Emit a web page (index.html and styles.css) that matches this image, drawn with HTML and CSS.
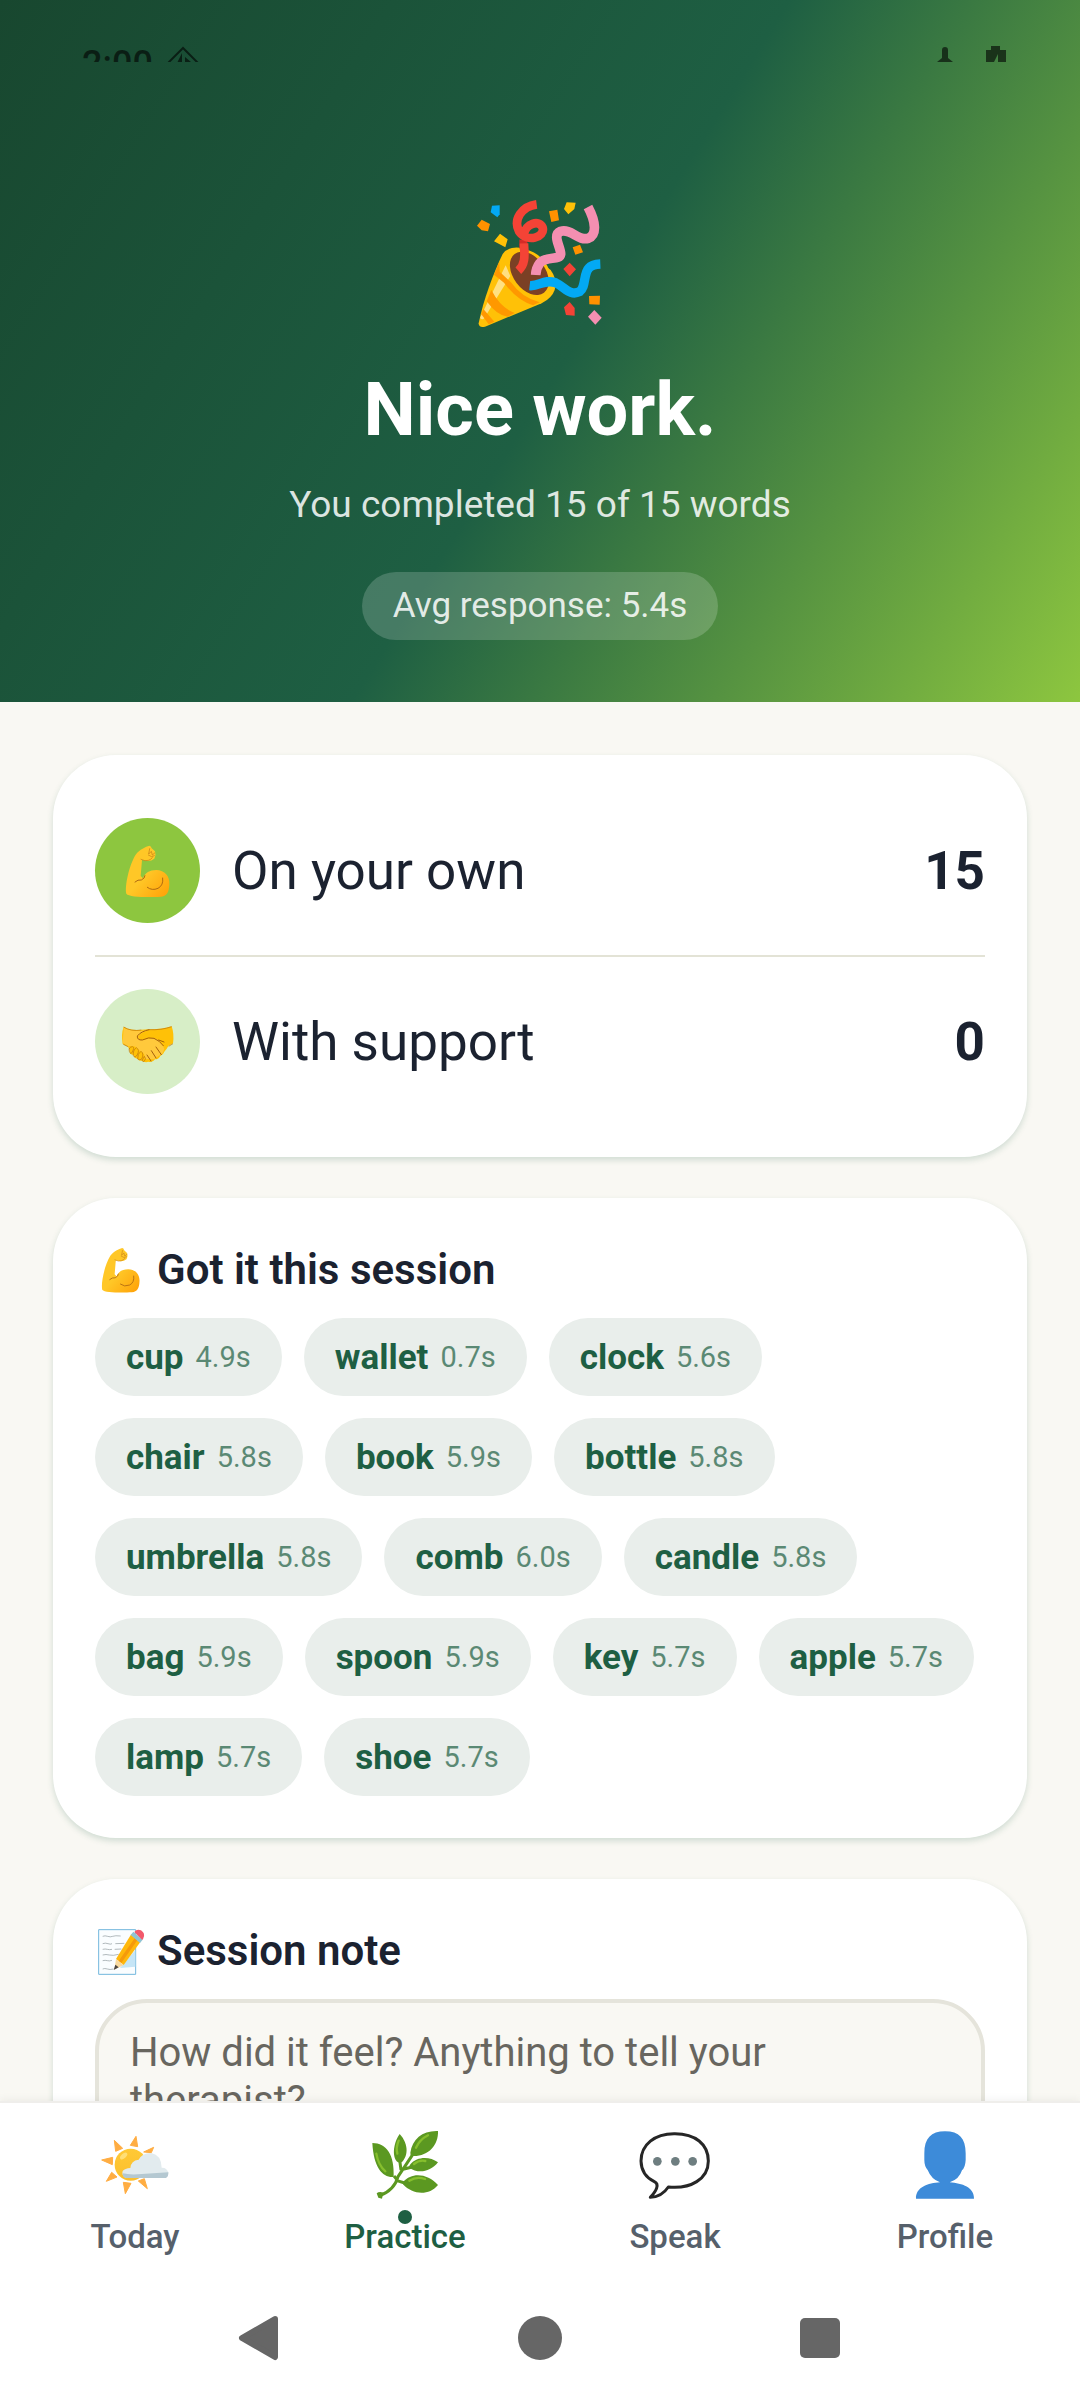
FILE: index.html
```html
<!DOCTYPE html>
<html lang="en">
<head>
  <meta charset="UTF-8">
  <meta name="viewport" content="width=device-width, initial-scale=1.0">
  <title>Session summary</title>
  <link rel="stylesheet" href="styles.css">
</head>
<body>
  <svg class="defs" aria-hidden="true">
    <defs>
      <linearGradient id="skin" x1="0" y1="0" x2="1" y2="1">
        <stop offset="0.5" stop-color="#ffc727"/>
        <stop offset="1" stop-color="#ff9f06"/>
      </linearGradient>
      <linearGradient id="sun" x1="0" y1="0" x2="0" y2="1">
        <stop offset="0" stop-color="#ffc935"/>
        <stop offset="1" stop-color="#fbbf2e"/>
      </linearGradient>
    </defs>
    <symbol id="arm" viewBox="112 127 180 180">
      <path fill="url(#skin)" d="M137 285C132 262 145 200 165 168C177 152 195 144 206 141Q211 141 213 149L223 158Q227 168 221 180Q213 187 201 187L184 184L180 232L187 239C193 222 207 214 227 214C252 215 268 232 266 258C265 280 258 293 240 294C205 296 145 296 137 285Z"/>
      <path fill="none" stroke="#b06a12" stroke-width="3" stroke-linecap="round" d="M163 250Q172 242 182 244Q193 239 193 231M200 266Q214 277 232 269Q249 260 246 238"/>
      <path fill="none" stroke="#c67a16" stroke-width="2" stroke-linecap="round" d="M181 182Q194 189 203 185Q211 183 215 177M207 150L204 166L212 158L215 169L222 163M203 169L213 174L221 171"/>
    </symbol>
  </svg>

  <div class="app">
    <main class="scroll">
      <header class="hero">
        <div class="status">
          <span class="clock">2:00</span>
          <svg class="status-left" width="40" height="40" viewBox="0 0 40 40">
            <path d="M20 6L3 23H37Z" fill="none" stroke="currentColor" stroke-width="2"/>
            <path d="M19 11V25H12ZM22 15L28 20V24H22Z" fill="currentColor"/>
          </svg>
          <svg class="status-right" width="72" height="40" viewBox="0 0 72 40">
            <path d="M6 8Q6 5 9 5T12 8V16L17 20H1L6 16Z" fill="currentColor"/>
            <path d="M50 8H55V4H64V8H70V22H62V12L57 22H50Z" fill="currentColor"/>
          </svg>
        </div>
        <svg class="party" viewBox="0 0 480 480" aria-hidden="true">
          <path fill="#ffc107" d="M56 430C70 360 100 280 128 222Q143 199 180 203L272 270Q293 300 284 330Q276 354 245 370L75 440Q56 444 56 430Z"/>
          <path fill="#ffe082" d="M137 256L60 414Q68 422 73 414L151 288Z"/>
          <path fill="#ff9800" d="M118 245L102 284L132 308Q170 360 219 376L239 367Q184 351 154 308L119 275ZM94 330L80 364Q112 408 143 410L164 399Q122 384 94 330ZM70 387L64 403L86 433L103 425Z"/>
          <ellipse cx="212" cy="278" rx="53" ry="76" transform="rotate(-37 212 278)" fill="#ffc107"/>
          <ellipse cx="208" cy="280" rx="48" ry="73" transform="rotate(-37 208 280)" fill="#7b4025"/>
          <path fill="none" stroke="#d52b27" stroke-width="24" d="M190 180Q188 199 194 218"/>
          <path fill="none" stroke="#f44336" stroke-width="26" d="M230 73C185 79 159 119 177 154C201 190 256 172 248 143C238 117 196 132 192 162M192 190C193 220 199 251 175 272"/>
          <path fill="none" stroke="#f48fb1" stroke-width="29" d="M384 81C408 126 411 165 385 175C355 184 333 145 302 154C275 165 303 202 302 222C299 244 259 225 239 250Q228 264 227 285"/>
          <path fill="none" stroke="#03a9f4" stroke-width="28" d="M209 317C236 320 254 296 286 308C315 322 330 349 359 335C378 322 370 281 386 265Q396 253 421 252"/>
          <path fill="#03a9f4" d="M96 77L119 76V103L112 112L92 97Z"/>
          <path fill="#ff9100" d="M65 119L90 132L84 154L65 151L51 137ZM267 94L292 89L297 121L274 126ZM338 202L360 194L369 217L346 224ZM387 348L420 347L419 374L388 373Z"/>
          <path fill="#ffc107" d="M120 161L143 178L136 202L102 184ZM320 67L347 68L343 87L325 103L312 87Z"/>
          <path fill="#f44336" d="M329 248L348 268L329 289L310 267ZM329 366L344 384V407L318 405L312 382Z"/>
          <path fill="#f48fb1" d="M403 390L425 413L406 434L384 410Z"/>
        </svg>
        <h1>Nice work.</h1>
        <p class="subtitle">You completed 15 of 15 words</p>
        <p class="pill">Avg response: 5.4s</p>
      </header>

      <div class="content">
        <section class="card stats">
          <div class="stat">
            <span class="badge"><svg><use href="#arm"/></svg></span>
            <span class="stat-label">On your own</span>
            <strong>15</strong>
          </div>
          <div class="stat">
            <span class="badge light">
              <svg viewBox="112 634 180 180" aria-hidden="true">
                <path fill="#ffc107" d="M129 678Q151 691 182 687L204 686Q242 687 273 677Q281 700 277 728L263 736Q257 747 252 752Q248 762 239 766Q233 777 223 776Q216 787 203 783Q194 787 183 780Q174 781 170 774Q160 772 158 763Q146 761 147 750L142 738L126 730Q121 700 129 678Z"/>
                <path fill="#ffc93c" d="M172 708Q180 696 200 689L179 690Q150 692 129 681L126 727L143 737Q165 732 175 749Q192 754 194 775L219 776L246 758L251 744Q237 714 218 712Q197 715 187 718Q174 718 172 708Z"/>
                <path fill="none" stroke="#a5600c" stroke-width="3" stroke-linecap="round" stroke-linejoin="round" d="M205 687Q181 692 170 706Q169 719 185 718Q205 708 220 713Q237 720 248 735M234 718L250 724M226 739L242 762M212 750L226 772M199 763L211 781"/>
                <path fill="none" stroke="#b9710f" stroke-width="2" stroke-linejoin="round" d="M129 679Q151 693 182 688M204 687Q242 689 273 678M128 731L142 738M264 737L277 729M146 752Q143 739 156 738Q163 740 154 755Q150 763 146 752ZM158 765Q156 749 167 741Q178 747 170 762Q163 774 158 765ZM171 775Q170 758 181 752Q190 758 184 774Q178 781 171 775ZM184 780L191 767Q199 773 190 783Z"/>
              </svg>
            </span>
            <span class="stat-label">With support</span>
            <strong>0</strong>
          </div>
        </section>

        <section class="card">
          <h2><svg><use href="#arm"/></svg>Got it this session</h2>
          <ul class="chips">
            <li><b>cup</b><span>4.9s</span></li>
            <li><b>wallet</b><span>0.7s</span></li>
            <li><b>clock</b><span>5.6s</span></li>
            <li><b>chair</b><span>5.8s</span></li>
            <li><b>book</b><span>5.9s</span></li>
            <li><b>bottle</b><span>5.8s</span></li>
            <li><b>umbrella</b><span>5.8s</span></li>
            <li><b>comb</b><span>6.0s</span></li>
            <li><b>candle</b><span>5.8s</span></li>
            <li><b>bag</b><span>5.9s</span></li>
            <li><b>spoon</b><span>5.9s</span></li>
            <li><b>key</b><span>5.7s</span></li>
            <li><b>apple</b><span>5.7s</span></li>
            <li><b>lamp</b><span>5.7s</span></li>
            <li><b>shoe</b><span>5.7s</span></li>
          </ul>
        </section>

        <section class="card">
          <h2>
            <svg viewBox="15 15 156 156" aria-hidden="true">
              <path fill="#fafdff" stroke="#72b7dd" stroke-width="3" d="M26 29H137V163H26Z"/>
              <path fill="#c5e5f6" d="M136 90V140L90 144Z"/>
              <path fill="none" stroke="#8d979c" stroke-width="2" d="M38 49Q45 46 53 49T68 49T92 48M38 71Q46 68 54 71T66 71M76 71L103 70M38 88Q46 86 52 88T66 88M74 88L94 87M38 105Q48 102 58 105T86 103M38 122Q46 120 52 122T66 121M38 147Q44 144 52 147T70 147"/>
              <path fill="#ffb80c" d="M124 42L151 66L101 135L78 117Z"/>
              <path fill="#f59a0b" d="M136 52L143 59L94 129L86 123Z"/>
              <path fill="#f8d9a0" d="M78 117L101 135L73 149Z"/>
              <path fill="#4c4541" d="M76 134L86 142L71 150Z"/>
              <path fill="#8fc4d4" d="M130 35L158 59L150 69L122 45Z"/>
              <path fill="#f2596b" d="M133 36Q141 25 153 31Q167 40 160 55L157 60Z"/>
            </svg>
            <label for="note">Session note</label>
          </h2>
          <textarea id="note" rows="4" placeholder="How did it feel? Anything to tell your therapist?"></textarea>
        </section>
      </div>
    </main>

    <nav class="tabs">
      <a href="#today">
        <span class="tab-icon">
          <svg viewBox="117 87 216 216" aria-hidden="true">
            <path fill="#ffad42" stroke="#ffad42" stroke-width="3" stroke-linejoin="round" d="M163 121L188 145L167 154ZM228 109L233 140L211 136ZM281 142L274 158L251 156ZM125 180L158 172L157 194ZM139 244L155 217L171 231ZM190 247L213 250L196 281ZM235 243L253 236L262 266Z"/>
            <circle cx="212" cy="194" r="48" fill="url(#sun)"/>
            <ellipse cx="191" cy="168" rx="13" ry="7" transform="rotate(-42 191 168)" fill="#ffdf76"/>
            <path fill="#e2ebee" d="M196 233Q184 226 188 213Q195 205 211 204Q213 181 236 179Q248 157 274 159Q304 165 305 203Q320 202 325 217Q325 231 317 233Z"/>
            <path fill="#b4c8d1" d="M188 220Q210 225 245 222L325 217Q326 231 317 234H197Q187 231 188 220Z"/>
          </svg>
        </span>
        Today
      </a>
      <a href="#practice" class="active" aria-current="page">
        <span class="tab-icon">
          <svg viewBox="927 87 216 216" aria-hidden="true">
            <path fill="#5b9821" d="M937 129C980 129 1004 165 1001 231C969 234 941 204 937 129ZM1019 102C1036 119 1052 157 1027 185Q1017 191 1010 184C993 161 1006 119 1019 102ZM1134 93C1136 137 1103 171 1056 168Q1050 165 1051 158C1057 116 1089 91 1134 93ZM1134 187C1110 218 1072 221 1048 203Q1046 199 1050 194C1073 168 1109 170 1134 187ZM1134 255C1107 288 1058 285 1029 253Q1027 249 1030 245C1055 216 1103 219 1134 255Z"/>
            <path fill="none" stroke="#5b9821" stroke-width="9" d="M959 287Q1003 271 1014 230L1058 164M1019 180L1023 210M1002 228L1010 238M1023 209L1054 202M1011 242L1034 249"/>
            <path fill="#5b9821" d="M950 280Q958 273 970 278L966 296L955 293Z"/>
            <path fill="none" stroke="#86bf2d" stroke-width="7" stroke-linecap="round" d="M949 161Q955 196 976 214M1016 122Q1007 144 1012 161M1068 143Q1079 119 1104 106M1062 192Q1078 179 1096 183M1048 242Q1070 228 1095 237"/>
          </svg>
        </span>
        Practice
      </a>
      <a href="#speak">
        <span class="tab-icon">
          <svg viewBox="117 87 216 216" aria-hidden="true">
            <path fill="#fff" stroke="#262626" stroke-width="9" stroke-linejoin="round" d="M225 101C164 100 123 134 123 183Q124 226 163 245C180 253 168 274 151 292Q185 291 205 261C272 268 325 237 325 183C325 132 285 101 225 101Z"/>
            <g fill="#6e7e80"><circle cx="172" cy="184" r="13"/><circle cx="226" cy="184" r="13"/><circle cx="278" cy="184" r="13"/></g>
          </svg>
        </span>
        Speak
      </a>
      <a href="#profile">
        <span class="tab-icon">
          <svg viewBox="927 87 216 216" aria-hidden="true">
            <path fill="#3d8bd9" d="M1035 94C1078 94 1097 116 1097 160V180Q1096 202 1086 211Q1077 239 1049 247C1087 250 1123 262 1122 296H948C947 262 984 249 1020 247Q994 238 983 210Q973 199 973 180V160C973 116 993 94 1035 94Z"/>
          </svg>
        </span>
        Profile
      </a>
    </nav>

    <div class="sysbar">
      <button type="button" aria-label="Back"><svg viewBox="0 0 48 48"><path d="M39 5L6 24L39 43Z" stroke="currentColor" stroke-width="6" stroke-linejoin="round" fill="currentColor"/></svg></button>
      <button type="button" aria-label="Home"><svg viewBox="0 0 48 48"><circle cx="24" cy="24" r="22" fill="currentColor"/></svg></button>
      <button type="button" aria-label="Recent apps"><svg viewBox="0 0 48 48"><rect x="4" y="4" width="40" height="40" rx="5" fill="currentColor"/></svg></button>
    </div>
  </div>
</body>
</html>
```

FILE: styles.css
```css
* {
  box-sizing: border-box;
}
body {
  margin: 0;
  font-family: Roboto, "Noto Sans", sans-serif;
  color: #1b2230;
  background: #f9f8f3;
}
h1, h2, p, ul {
  margin: 0;
  padding: 0;
}
.defs {
  position: absolute;
  width: 0;
  height: 0;
}
.app {
  display: flex;
  flex-direction: column;
  height: 100vh;
}
.scroll {
  flex: 1;
  min-height: 0;
  overflow-y: auto;
  scrollbar-width: none;
}

/* hero */
.hero {
  display: flex;
  flex-direction: column;
  align-items: center;
  padding-bottom: 62px;
  background: linear-gradient(122deg, #18472f 0%, #1e5f43 52%, #8dc63f 100%);
  color: #fff;
}
.status {
  display: flex;
  align-items: flex-start;
  width: 100%;
  height: 62px;
  padding: 42px 72px 0 82px;
  overflow: hidden;
  color: rgba(0, 0, 0, 0.6);
}
.clock {
  font-size: 36px;
  line-height: 44px;
  font-weight: 500;
}
.status svg {
  flex-shrink: 0;
}
.status-left {
  margin-left: 10px;
}
.status-right {
  margin-left: auto;
}
.party {
  width: 160px;
  height: 160px;
  margin-top: 118px;
}
.hero h1 {
  margin-top: 25px;
  font-size: 74px;
  line-height: 90px;
  font-weight: 700;
}
.subtitle {
  margin-top: 27px;
  font-size: 37px;
  line-height: 46px;
  color: rgba(255, 255, 255, 0.85);
}
.pill {
  margin-top: 44px;
  padding: 12px 31px;
  border-radius: 34px;
  background: rgba(255, 255, 255, 0.18);
  font-size: 35px;
  line-height: 44px;
  color: rgba(255, 255, 255, 0.85);
}

/* cards */
.content {
  display: flex;
  flex-direction: column;
  gap: 41px;
  padding: 53px;
}
.card {
  padding: 42px;
  border-radius: 63px;
  background: #fff;
  box-shadow: 0 3px 6px rgba(30, 95, 67, 0.18);
}
.card h2 {
  display: flex;
  align-items: center;
  gap: 10px;
  margin-bottom: 18px;
  font-size: 42px;
  line-height: 60px;
  font-weight: 600;
}
.card h2 svg {
  width: 52px;
  height: 52px;
}
.stats {
  padding: 31px 42px;
}
.stat {
  display: flex;
  align-items: center;
  gap: 32px;
  padding: 32px 0;
  font-size: 53px;
  line-height: 64px;
}
.stat + .stat {
  border-top: 2px solid #e3e3d6;
}
.stat strong {
  font-weight: 700;
}
.stat-label {
  flex: 1;
}
.badge {
  display: flex;
  align-items: center;
  justify-content: center;
  width: 105px;
  height: 105px;
  border-radius: 50%;
  background: #8dc63f;
}
.badge.light {
  background: #d7eec7;
}
.badge svg {
  width: 60px;
  height: 60px;
}

.chips {
  display: flex;
  flex-wrap: wrap;
  gap: 22px;
  list-style: none;
}
.chips li {
  display: flex;
  align-items: center;
  gap: 12px;
  height: 78px;
  padding: 0 31px;
  border-radius: 39px;
  background: #e9eeeb;
  color: #1e5f43;
}
.chips b {
  font-size: 35px;
  font-weight: 700;
}
.chips span {
  font-size: 29px;
  opacity: 0.7;
}

textarea {
  display: block;
  width: 100%;
  padding: 26px 31px;
  border: 4px solid #e5e4db;
  border-radius: 52px;
  background: #f9f8f3;
  font-family: inherit;
  font-size: 40px;
  line-height: 48px;
  color: #1b2230;
  resize: none;
}
textarea::placeholder {
  color: #68665f;
}

/* bottom navigation */
.tabs {
  position: relative;
  display: flex;
  padding: 26px 0 20px;
  border-top: 2px solid #efeeeb;
  background: #fff;
  box-shadow: 0 -2px 8px rgba(0, 0, 0, 0.05);
}
.tabs a {
  flex: 1;
  display: flex;
  flex-direction: column;
  align-items: center;
  gap: 18px;
  font-size: 33px;
  line-height: 36px;
  font-weight: 500;
  color: #56606b;
  text-decoration: none;
}
.tabs .active {
  color: #1e5f43;
}
.tab-icon {
  position: relative;
  width: 72px;
  height: 72px;
}
.tab-icon svg {
  display: block;
}
.active .tab-icon::after {
  content: "";
  position: absolute;
  left: 29px;
  bottom: -23px;
  width: 14px;
  height: 14px;
  border-radius: 50%;
  background: #1e5f43;
}
.sysbar {
  position: relative;
  display: flex;
  align-items: center;
  justify-content: center;
  gap: 232px;
  height: 125px;
  background: #fff;
}
.sysbar button {
  width: 48px;
  height: 48px;
  padding: 0;
  border: 0;
  background: none;
  color: #666;
}
.sysbar svg {
  display: block;
}
```
